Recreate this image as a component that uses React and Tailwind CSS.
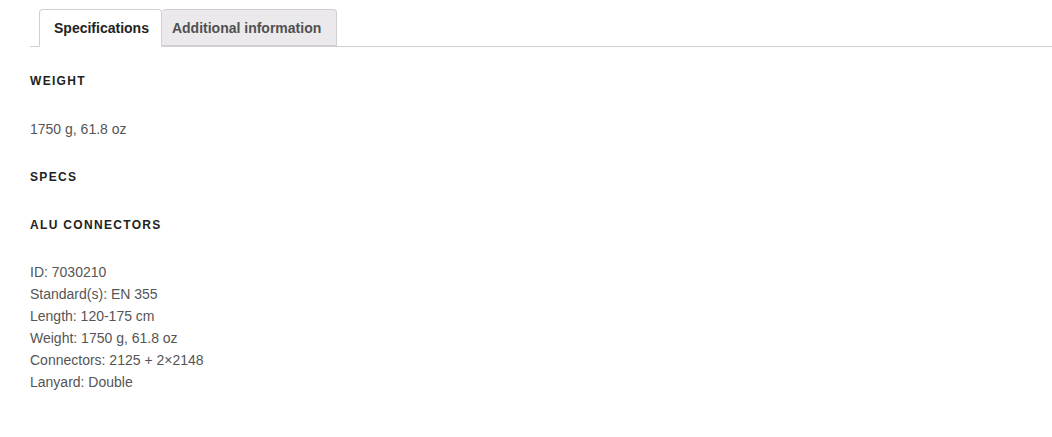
const specs = [
    'ID: 7030210',
    'Standard(s): EN 355',
    'Length: 120-175 cm',
    'Weight: 1750 g, 61.8 oz',
    'Connectors: 2125 + 2×2148',
    'Lanyard: Double',
];

export default function App() {
    return (
        <div className="min-h-[437px] bg-white pl-[30px] font-['Liberation_Sans',Arial,sans-serif]">
            {/* Tabs */}
            <div className="flex border-b border-[#d3ced2] pl-[9px] pt-[9px]">
                <div className="-mb-px flex h-[38px] items-center rounded-t-[4px] border border-b-white border-[#d3ced2] bg-white pl-[14px] pr-[12px] pt-px text-[14px] font-bold text-[#222]">
                    Specifications
                </div>
                <div className="flex h-[37px] items-center rounded-t-[4px] border border-l-0 border-[#d3ced2] bg-[#ebe9eb] pl-[10px] pr-[15px] pt-px text-[14px] font-bold text-[#515151]">
                    Additional information
                </div>
            </div>

            {/* Panel */}
            <div className="pt-[23px] text-[14px] leading-[22px] text-[#555]">
                <div className="mb-[26px] text-[12px] font-bold uppercase tracking-[0.11em] text-[#222]">Weight</div>
                <div className="mb-[26px]">1750 g, 61.8 oz</div>
                <div className="mb-[26px] text-[12px] font-bold uppercase tracking-[0.11em] text-[#222]">Specs</div>
                <div className="mb-[25px] text-[12px] font-bold uppercase tracking-[0.11em] text-[#222]">Alu connectors</div>
                <ul>
                    {specs.map((s) => (
                        <li key={s}>{s}</li>
                    ))}
                </ul>
            </div>
        </div>
    );
}
